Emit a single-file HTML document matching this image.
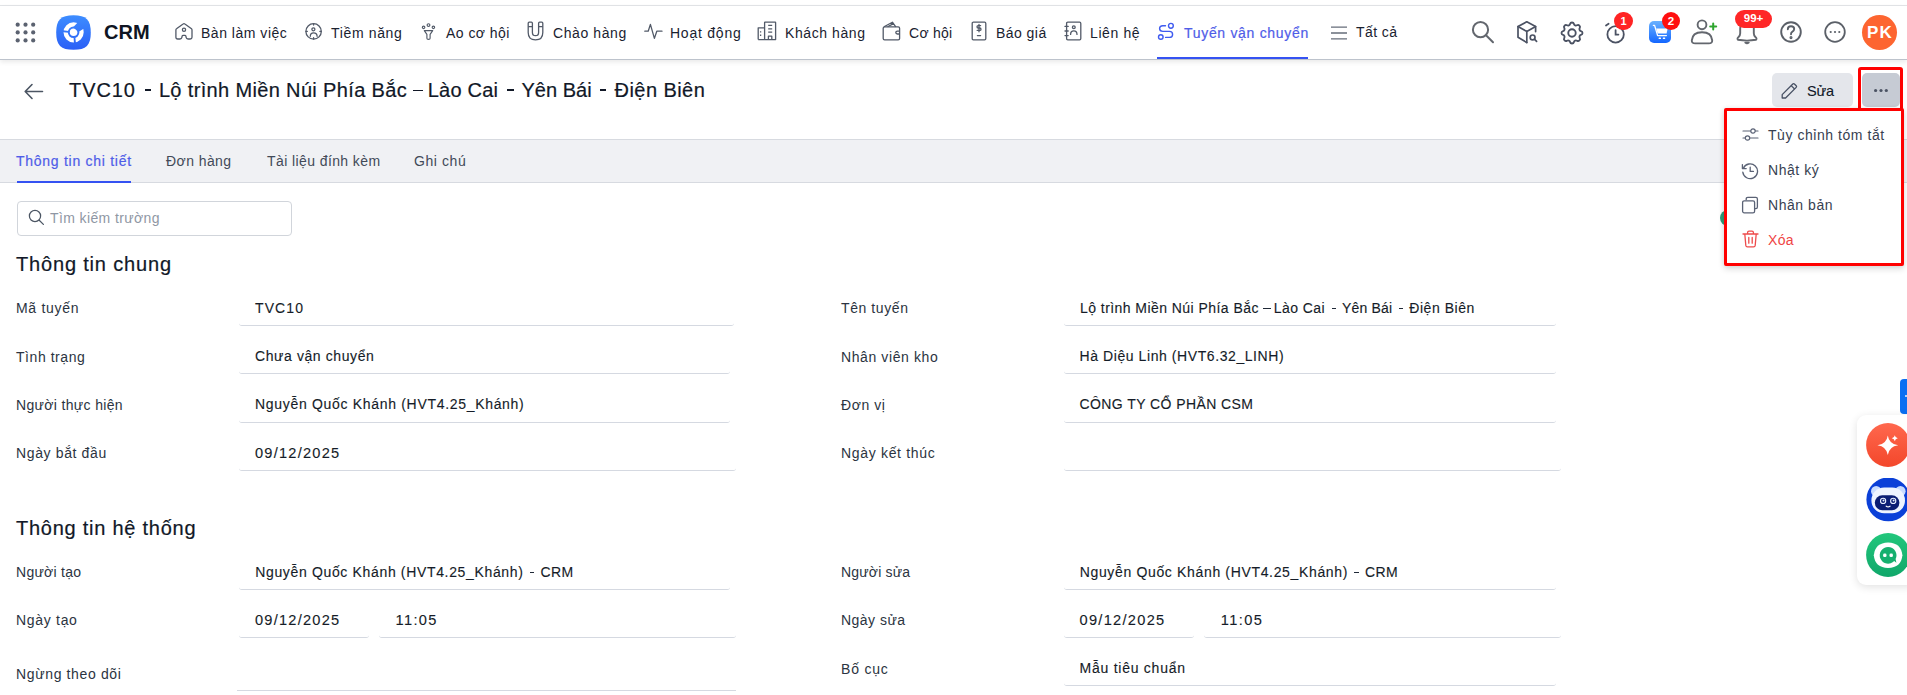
<!DOCTYPE html><html><head><meta charset="utf-8">
<style>
*{box-sizing:border-box;margin:0;padding:0}
html,body{width:1907px;height:695px;overflow:hidden;background:#fff}
body{position:relative;font-family:"Liberation Sans",sans-serif;color:#1f2937}
.a{position:absolute;white-space:nowrap}
.t14{font-size:14px;line-height:20px;letter-spacing:0.35px}
.topline{position:absolute;left:0;top:5px;width:1907px;height:1px;background:#e3e5e8}
.hdr{position:absolute;left:0;top:6px;width:1907px;height:54px;background:#fff;border-bottom:1px solid #bdc3cc;box-shadow:0 2px 5px rgba(0,0,0,0.09)}
.nav{color:#1a2230}
.ico{position:absolute}
.ico svg{display:block}
.lbl{color:#2b3441}
.val{color:#1f2937}
.ul{border-bottom:1px solid #d5d9e1;border-radius:0 0 3px 3px}
.sec{font-size:20px;line-height:24px;color:#111827}
.med{-webkit-text-stroke:0.2px currentColor}
.val.med{-webkit-text-stroke:0.12px currentColor}
.val{color:#151c28}
</style></head>
<body>
<div class="topline"></div>
<div class="hdr"></div>

<!-- header content -->
<div id="header">
  <!-- grid dots -->
  <svg class="a" style="left:14px;top:21px" width="24" height="24" viewBox="0 0 24 24" fill="#5b6270">
    <circle cx="3.7" cy="3.7" r="2.1"></circle><circle cx="11.5" cy="3.7" r="2.1"></circle><circle cx="19.2" cy="3.7" r="2.1"></circle>
    <circle cx="3.7" cy="11.4" r="2.1"></circle><circle cx="11.5" cy="11.4" r="2.1"></circle><circle cx="19.2" cy="11.4" r="2.1"></circle>
    <circle cx="3.7" cy="19.4" r="2.1"></circle><circle cx="11.5" cy="19.4" r="2.1"></circle><circle cx="19.2" cy="19.4" r="2.1"></circle>
  </svg>
  <!-- logo -->
  <svg class="a" style="left:56px;top:15px" width="35" height="35" viewBox="0 0 35 35">
    <defs><linearGradient id="lg" x1="0" y1="0" x2="0" y2="1"><stop offset="0" stop-color="#3d8dff"></stop><stop offset="1" stop-color="#2b5ff6"></stop></linearGradient>
    <mask id="lm" maskUnits="userSpaceOnUse" x="0" y="0" width="35" height="35">
      <rect x="0" y="0" width="35" height="35" fill="#000"></rect>
      <circle cx="17.6" cy="17.3" r="3.75" fill="#fff"></circle>
      <circle cx="17.6" cy="17.3" r="7.95" fill="none" stroke="#fff" stroke-width="4.3"></circle>
      <g fill="#000">
        <path d="M12.6 16.0L5.0 14.9L4.8 16.9L12.6 17.7Z"></path>
        <path d="M17.6 22.4L18.0 29.0L20.0 28.8L19.3 22.2Z"></path>
        <path d="M17.2 12.2L22.6 6.4L29.2 12.8L22.4 17.0Z"></path>
      </g>
    </mask></defs>
    <path d="M17.5 0.2C30.2 0.2 34.8 4.8 34.8 17.5S30.2 34.8 17.5 34.8 0.2 30.2 0.2 17.5 4.8 0.2 17.5 0.2Z" fill="url(#lg)"></path>
    <rect x="0" y="0" width="35" height="35" fill="#fff" mask="url(#lm)"></rect>
  </svg>
  <div class="a" style="left:104px;top:20px;font-size:20px;line-height:24px;font-weight:700;color:#0f1523;letter-spacing:0px">CRM</div>
</div>


<!-- nav icons -->
<svg class="a" style="left:174px;top:21px" width="20" height="20" viewBox="0 0 20 20" fill="none" stroke="#525a68" stroke-width="1.3" stroke-linejoin="round">
  <path d="M1.9 8.9Q1.9 8.2 2.5 7.8L9.1 2.9Q10 2.2 10.9 2.9L17.5 7.8Q18 8.2 18 8.9V16.2Q18 18 16.2 18H14Q12.4 18 12.1 16.4L11.9 15.2Q11.7 14.3 10.8 14.3H9.2Q8.3 14.3 8.1 15.2L7.9 16.4Q7.6 18 6 18H3.7Q1.9 18 1.9 16.2Z"></path>
  <circle cx="10" cy="8.7" r="1.6"></circle>
</svg>
<div class="a t14 nav" style="left: 201px; top: 23px; letter-spacing: 0.515px;">Bàn làm việc</div>

<svg class="a" style="left:304px;top:22px" width="19" height="19" viewBox="0 0 19 19" fill="none" stroke="#525a68" stroke-width="1.3" stroke-linecap="round">
  <circle cx="9.6" cy="9.4" r="7.7"></circle>
  <circle cx="9.4" cy="7.3" r="1.5"></circle>
  <path d="M6.3 14.3Q6.3 10.8 9.6 10.8Q13 10.8 13.1 14.3"></path>
  <path d="M9.6 1.8V3.1M9.6 17V15.7M2 9.4H3.3M17.2 9.4H15.9"></path>
</svg>
<div class="a t14 nav" style="left: 331px; top: 23px; letter-spacing: 0.649px;">Tiềm năng</div>

<svg class="a" style="left:421px;top:21px" width="15" height="20" viewBox="0 0 15 20" fill="none" stroke="#525a68" stroke-width="1.15" stroke-linejoin="round">
  <circle cx="2.6" cy="6.3" r="1.25"></circle><circle cx="7.5" cy="4.1" r="1.4"></circle><circle cx="12.4" cy="6.3" r="1.25"></circle>
  <path d="M3.3 9.6H11.7L9.1 13.4V17.2Q9.1 18.3 7.5 18.3Q5.9 18.3 5.9 17.2V13.4Z"></path>
</svg>
<div class="a t14 nav" style="left: 446px; top: 23px; letter-spacing: 0.455px;">Ao cơ hội</div>

<svg class="a" style="left:527px;top:21px" width="17" height="20" viewBox="0 0 17 20" fill="none" stroke="#525a68" stroke-width="1.3" stroke-linejoin="round">
  <path d="M1.2 2.2Q1.2 1.2 2.2 1.2H4.4Q5.4 1.2 5.4 2.2V11.4Q5.4 14.6 8.5 14.6Q11.6 14.6 11.6 11.4V2.2Q11.6 1.2 12.6 1.2H14.8Q15.8 1.2 15.8 2.2V11.4Q15.8 18.8 8.5 18.8Q1.2 18.8 1.2 11.4Z"></path>
  <path d="M1.2 5.6H5.4M11.6 5.6H15.8"></path>
</svg>
<div class="a t14 nav" style="left: 553px; top: 23px; letter-spacing: 0.588px;">Chào hàng</div>

<svg class="a" style="left:644px;top:23px" width="19" height="17" viewBox="0 0 19 17" fill="none" stroke="#525a68" stroke-width="1.3" stroke-linecap="round" stroke-linejoin="round">
  <path d="M0.8 8.2H4.2L6.4 1.4L10.4 15.4L12.8 8.2H18"></path>
</svg>
<div class="a t14 nav" style="left: 670px; top: 23px; letter-spacing: 0.764px;">Hoạt động</div>

<svg class="a" style="left:757px;top:21px" width="20" height="20" viewBox="0 0 20 20" fill="none" stroke="#525a68" stroke-width="1.3" stroke-linejoin="round">
  <path d="M1.2 18.6V6.8H7.6M7.6 18.6V1.6Q7.6 1.2 8 1.2H18.2Q18.6 1.2 18.6 1.6V18.6H1.2"></path>
  <path d="M11.2 4.4H15.2M11.2 7.8H15.2M11.2 11.2H15.2M3.6 10.2V11.6M3.6 13.6V15M11.4 18.6V15.2H14.8V18.6"></path>
</svg>
<div class="a t14 nav" style="left: 785px; top: 23px; letter-spacing: 0.587px;">Khách hàng</div>

<svg class="a" style="left:882px;top:21px" width="19" height="20" viewBox="0 0 19 20" fill="none" stroke="#525a68" stroke-width="1.3" stroke-linejoin="round">
  <path d="M1.2 7.2Q1.2 5.8 2.6 5.8H16.2Q17.6 5.8 17.6 7.2V17.4Q17.6 18.8 16.2 18.8H2.6Q1.2 18.8 1.2 17.4Z"></path>
  <path d="M2 5.8L10.4 1.2L13.8 5.8M5.6 5.8L11.6 2.6"></path>
  <path d="M17.6 10.2H15.4Q13.8 10.2 13.8 11.6Q13.8 13 15.4 13H17.6"></path>
</svg>
<div class="a t14 nav" style="left: 909px; top: 23px; letter-spacing: 0.269px;">Cơ hội</div>

<svg class="a" style="left:971px;top:21px" width="16" height="20" viewBox="0 0 16 20" fill="none" stroke="#525a68" stroke-width="1.3" stroke-linejoin="round" stroke-linecap="round">
  <path d="M1.2 2.4Q1.2 1.2 2.4 1.2H13.6Q14.8 1.2 14.8 2.4V17.6Q14.8 18.8 13.6 18.8H2.4Q1.2 18.8 1.2 17.6Z"></path>
  <path d="M9.6 4.6H7.2Q6 4.6 6 5.8Q6 7 7.2 7H8.8Q10 7 10 8.2Q10 9.4 8.8 9.4H6.2M8 3.4V10.8M6.4 14.6H9.6"></path>
</svg>
<div class="a t14 nav" style="left: 996px; top: 23px; letter-spacing: 0.456px;">Báo giá</div>

<svg class="a" style="left:1064px;top:21px" width="18" height="20" viewBox="0 0 18 20" fill="none" stroke="#525a68" stroke-width="1.3" stroke-linejoin="round" stroke-linecap="round">
  <path d="M2.6 2.4Q2.6 1.2 3.8 1.2H15.6Q16.8 1.2 16.8 2.4V17.6Q16.8 18.8 15.6 18.8H3.8Q2.6 18.8 2.6 17.6Z"></path>
  <path d="M1 5.4H4.2M1 10H4.2M1 14.6H4.2"></path>
  <circle cx="9.8" cy="6.2" r="1.4"></circle>
  <path d="M6.6 13.4Q6.6 9.8 9.8 9.8Q13 9.8 13 13.4"></path>
</svg>
<div class="a t14 nav" style="left: 1090px; top: 23px; letter-spacing: 0.614px;">Liên hệ</div>

<svg class="a" style="left:1157px;top:22px" width="19" height="19" viewBox="0 0 19 19" fill="none" stroke="#3f5bf0" stroke-width="1.4" stroke-linecap="round">
  <circle cx="3.8" cy="15" r="2.3"></circle><circle cx="13.9" cy="3.8" r="2.4"></circle>
  <path d="M8.5 3.8H5.8Q2.6 3.8 2.6 6.6Q2.6 9.4 5.8 9.4H12.4Q15.6 9.4 15.6 12.4Q15.6 15.4 12.4 15.4H8.6"></path>
</svg>
<div class="a t14 med" style="left: 1184px; top: 23px; color: rgb(79, 93, 232); letter-spacing: 0.689px;">Tuyến vận chuyển</div>
<div class="a" style="left:1157px;top:57px;width:151px;height:2px;background:#3552f2"></div>

<svg class="a" style="left:1330px;top:26px" width="18" height="14" viewBox="0 0 18 14" fill="none" stroke="#666d7a" stroke-width="1.3">
  <path d="M1 1.2H17M1 7H17M1 12.8H17"></path>
</svg>
<div class="a t14 nav" style="left: 1356px; top: 22px; letter-spacing: 0.403px;">Tất cả</div>


<!-- right icons -->
<svg class="a" style="left:1470px;top:20px" width="26" height="25" viewBox="0 0 26 25" fill="none" stroke="#63676e" stroke-width="2" stroke-linecap="round">
  <circle cx="10.5" cy="9.7" r="7.6"></circle><path d="M16 15.2L23 22.2"></path>
</svg>
<svg class="a" style="left:1516px;top:20px" width="25" height="25" viewBox="0 0 25 25" fill="none" stroke="#4b5263" stroke-width="1.7" stroke-linejoin="round" stroke-linecap="round">
  <path d="M19.6 11.6V6.6L10.8 1.8L2 6.6V17.2L10.8 22.6"></path>
  <path d="M2 6.6L10.8 11.4L19.6 6.6M10.8 11.4V22.4"></path>
  <circle cx="16.6" cy="17.4" r="2.4"></circle><path d="M18.4 19.2L20.6 21.4"></path>
</svg>
<svg class="a" style="left:1557.5px;top:18.5px" width="28" height="28" viewBox="0 0 24 24" fill="none" stroke="#4b5263" stroke-width="1.6" stroke-linejoin="round" stroke-linecap="round">
  <path d="M10.325 4.317c.426 -1.756 2.924 -1.756 3.35 0a1.724 1.724 0 0 0 2.573 1.066c1.543 -.94 3.31 .826 2.37 2.37a1.724 1.724 0 0 0 1.065 2.572c1.756 .426 1.756 2.924 0 3.35a1.724 1.724 0 0 0 -1.066 2.573c.94 1.543 -.826 3.31 -2.37 2.370a1.724 1.724 0 0 0 -2.572 1.065c-.426 1.756 -2.924 1.756 -3.35 0a1.724 1.724 0 0 0 -2.573 -1.066c-1.543 .94 -3.31 -.826 -2.37 -2.37a1.724 1.724 0 0 0 -1.065 -2.572c-1.756 -.426 -1.756 -2.924 0 -3.35a1.724 1.724 0 0 0 1.066 -2.573c-.94 -1.543 .826 -3.31 2.37 -2.37c1 .608 2.296 .07 2.572 -1.065z"></path>
  <circle cx="12" cy="12" r="3.2"></circle>
</svg>
<svg class="a" style="left:1603px;top:20px" width="24" height="25" viewBox="0 0 24 25" fill="none" stroke="#4b5263" stroke-width="1.8" stroke-linecap="round">
  <circle cx="12.6" cy="14.4" r="8.2"></circle><path d="M12.6 10.2V14.6H15.4M3 5.6L5.6 3.8"></path>
</svg>
<div class="a" style="left:1614px;top:12px;width:19px;height:18px;border-radius:9px;background:#ff2424;color:#fff;font-size:11px;font-weight:700;line-height:18px;text-align:center">1</div>

<svg class="a" style="left:1649px;top:21px" width="22" height="22" viewBox="0 0 22 22">
  <defs><linearGradient id="cg" x1="0" y1="0" x2="0" y2="1"><stop offset="0" stop-color="#6ab2ff"></stop><stop offset="1" stop-color="#1366ff"></stop></linearGradient></defs>
  <rect x="0" y="0" width="22" height="22" rx="5" fill="url(#cg)"></rect>
  <g fill="none" stroke="#fff" stroke-width="1.3" stroke-linecap="round" stroke-linejoin="round">
    <path d="M4.4 4.4H5.6L8.6 14.6H17.4"></path>
  </g>
  <path d="M7.2 7.4H18.6L17.6 12.6H8.6Z" fill="#fff"></path>
  <g fill="#fff"><rect x="9.6" y="16.4" width="2.4" height="1.6" rx="0.6"></rect><rect x="13.8" y="16.4" width="2.4" height="1.6" rx="0.6"></rect></g>
</svg>
<div class="a" style="left:1662px;top:12px;width:18px;height:18px;border-radius:9px;background:#ff0f0f;color:#fff;font-size:11.5px;font-weight:700;line-height:18px;text-align:center">2</div>

<svg class="a" style="left:1690px;top:19px" width="28" height="26" viewBox="0 0 28 26" fill="none" stroke="#63676e" stroke-width="1.9" stroke-linecap="round">
  <circle cx="12" cy="5.8" r="4.4"></circle>
  <path d="M5.2 24.4Q1.6 24.4 1.8 21.4Q2.4 13.2 12 13.2Q21.6 13.2 22.2 21.4Q22.4 24.4 18.8 24.4Z"></path>
  <path d="M23.2 4.6V10.6M20.2 7.6H26.2" stroke="#2ea52e" stroke-width="2"></path>
</svg>

<svg class="a" style="left:1735px;top:18px" width="24" height="27" viewBox="0 0 24 27" fill="none" stroke="#63676e" stroke-width="1.9" stroke-linecap="round" stroke-linejoin="round">
  <path d="M5.2 10Q5.2 3 12 3Q18.8 3 18.8 10V15.2Q18.8 17.6 20.6 19.2Q22.2 20.8 21 21.8Q12 23.4 3 21.8Q1.8 20.8 3.4 19.2Q5.2 17.6 5.2 15.2Z"></path>
  <path d="M10.3 24.6Q12 26 13.7 24.6Z" fill="#63676e"></path>
</svg>
<div class="a" style="left:1735px;top:10px;width:37px;height:18px;border-radius:9px;background:#ff2727;color:#fff;font-size:11.5px;font-weight:700;line-height:17px;text-align:center">99+</div>

<svg class="a" style="left:1779px;top:20px" width="24" height="24" viewBox="0 0 24 24" fill="none" stroke="#5b6068" stroke-width="1.9" stroke-linecap="round">
  <circle cx="12" cy="12" r="9.8"></circle>
  <path d="M8.8 9.2Q8.8 6.2 12 6.2Q15.2 6.2 15.2 9Q15.2 10.8 13.2 11.8Q12 12.4 12 14.2"></path>
  <circle cx="12" cy="17.6" r="0.6" fill="#5b6068"></circle>
</svg>
<svg class="a" style="left:1823px;top:20px" width="24" height="24" viewBox="0 0 24 24" fill="none" stroke="#5b6068" stroke-width="1.8">
  <circle cx="12" cy="12" r="9.8"></circle>
  <g fill="#5b6068" stroke="none"><circle cx="7.7" cy="12" r="1.1"></circle><circle cx="12" cy="12" r="1.1"></circle><circle cx="16.3" cy="12" r="1.1"></circle></g>
</svg>
<div class="a" style="left:1862px;top:15px;width:35px;height:35px;border-radius:50%;background:#fd6530;color:#fff;font-size:17px;font-weight:700;line-height:36px;text-align:center;letter-spacing:1.2px;text-indent:1.2px">PK</div>


<!-- title row -->
<svg class="a" style="left:24px;top:83px" width="20" height="17" viewBox="0 0 20 17" fill="none" stroke="#4b5563" stroke-width="1.6" stroke-linecap="round" stroke-linejoin="round">
  <path d="M18.5 8.5H1.5M8 1.5L1.2 8.5L8 15.5"></path>
</svg>
<div class="a med" style="left: 69.1px; top: 78px; font-size: 20px; line-height: 24px; color: rgb(17, 24, 39); letter-spacing: 0.888px;">TVC10</div>
<div class="a med" style="left: 158.9px; top: 78px; font-size: 20px; line-height: 24px; color: rgb(17, 24, 39); letter-spacing: 0.351px;">Lộ trình Miền Núi Phía Bắc</div>
<div class="a med" style="left: 427.7px; top: 78px; font-size: 20px; line-height: 24px; color: rgb(17, 24, 39); letter-spacing: 0.227px;">Lào Cai</div>
<div class="a med" style="left: 521.5px; top: 78px; font-size: 20px; line-height: 24px; color: rgb(17, 24, 39); letter-spacing: 0.006px;">Yên Bái</div>
<div class="a med" style="left: 614.6px; top: 78px; font-size: 20px; line-height: 24px; color: rgb(17, 24, 39); letter-spacing: 0.435px;">Điện Biên</div>
<div class="a" style="left:144.7px;top:89.3px;width:6.300000000000011px;height:1.6px;background:#111827"></div>
<div class="a" style="left:507.3px;top:89.3px;width:6.300000000000011px;height:1.6px;background:#111827"></div>
<div class="a" style="left:600.2px;top:89.3px;width:6.2999999999999545px;height:1.6px;background:#111827"></div>
<div class="a" style="left:412.8px;top:89.5px;width:10px;height:1.3px;background:#111827"></div>


<!-- tabs -->
<div class="a" style="left:0;top:139px;width:1907px;height:44px;background:#f0f1f4;border-top:1px solid #d7dae0;border-bottom:1px solid #d7dae0"></div>
<div class="a" style="left:17px;top:181px;width:114px;height:2px;background:#3552f2"></div>
<div class="a t14 med" style="left: 16px; top: 151px; color: rgb(79, 93, 232); letter-spacing: 0.729px;">Thông tin chi tiết</div>
<div class="a t14" style="left: 166px; top: 151px; color: rgb(66, 74, 88); letter-spacing: 0.428px;">Đơn hàng</div>
<div class="a t14" style="left: 267px; top: 151px; color: rgb(66, 74, 88); letter-spacing: 0.407px;">Tài liệu đính kèm</div>
<div class="a t14" style="left: 414px; top: 151px; color: rgb(66, 74, 88); letter-spacing: 0.578px;">Ghi chú</div>

<!-- search -->
<div class="a" style="left:17px;top:201px;width:275px;height:35px;border:1px solid #d1d5db;border-radius:4px"></div>
<svg class="a" style="left:28px;top:209px" width="17" height="17" viewBox="0 0 17 17" fill="none" stroke="#4b5563" stroke-width="1.25" stroke-linecap="round"><circle cx="7" cy="7" r="5.6"></circle><path d="M11.2 11.2L15.4 15.4"></path></svg>
<div class="a t14" style="left: 50px; top: 208px; color: rgb(143, 151, 164); letter-spacing: 0.385px;">Tìm kiếm trường</div>

<!--FORM-->
<div class="a sec med" style="left: 16px; top: 252.2px; letter-spacing: 0.826px;">Thông tin chung</div>
<div class="a t14 lbl" style="left: 16px; top: 297.9px; letter-spacing: 0.704px;">Mã tuyến</div>
<div class="a t14 val med" style="left: 255px; top: 297.6px; letter-spacing: 1.11px;">TVC10</div>
<div class="a ul" style="left:238.5px;top:317px;width:495.5px;height:9px"></div>
<div class="a t14 lbl" style="left: 841px; top: 297.9px; letter-spacing: 0.582px;">Tên tuyến</div>
<div class="a t14 val med" style="left: 1080px; top: 297.6px; letter-spacing: 0.444px;">Lộ trình Miền Núi Phía Bắc</div>
<div class="a t14 val med" style="left: 1273.8px; top: 297.6px; letter-spacing: 0.409px;">Lào Cai</div>
<div class="a t14 val med" style="left: 1342.1px; top: 297.6px; letter-spacing: 0.162px;">Yên Bái</div>
<div class="a t14 val med" style="left: 1409.3px; top: 297.6px; letter-spacing: 0.54px;">Điện Biên</div>
<div class="a" style="left:1263.4px;top:308.2px;width:7.5px;height:1.3px;background:#1f2937"></div>
<div class="a" style="left:1331.7px;top:308.2px;width:3.9px;height:1.3px;background:#1f2937"></div>
<div class="a" style="left:1399.3px;top:308.2px;width:3.9px;height:1.3px;background:#1f2937"></div>
<div class="a ul" style="left:1063.5px;top:317px;width:492.0px;height:9px"></div>
<div class="a t14 lbl" style="left: 16px; top: 346.9px; letter-spacing: 0.555px;">Tình trạng</div>
<div class="a t14 val med" style="left: 255px; top: 345.9px; letter-spacing: 0.59px;">Chưa vận chuyển</div>
<div class="a ul" style="left:238.5px;top:365px;width:491.5px;height:9px"></div>
<div class="a t14 lbl" style="left: 841px; top: 346.9px; letter-spacing: 0.6px;">Nhân viên kho</div>
<div class="a t14 val med" style="left: 1079.5px; top: 345.9px; letter-spacing: 0.578px;">Hà Diệu Linh (HVT6.32_LINH)</div>
<div class="a ul" style="left:1063.5px;top:365px;width:492.0px;height:9px"></div>
<div class="a t14 lbl" style="left: 16px; top: 394.9px; letter-spacing: 0.34px;">Người thực hiện</div>
<div class="a t14 val med" style="left: 255px; top: 393.9px; letter-spacing: 0.688px;">Nguyễn Quốc Khánh (HVT4.25_Khánh)</div>
<div class="a ul" style="left:238.5px;top:414px;width:491.5px;height:9px"></div>
<div class="a t14 lbl" style="left: 841px; top: 394.9px; letter-spacing: 0.548px;">Đơn vị</div>
<div class="a t14 val med" style="left: 1079.5px; top: 393.9px; letter-spacing: 0.42px;">CÔNG TY CỔ PHẦN CSM</div>
<div class="a ul" style="left:1063.5px;top:414px;width:492.0px;height:9px"></div>
<div class="a t14 lbl" style="left: 16px; top: 443.1px; letter-spacing: 0.629px;">Ngày bắt đầu</div>
<div class="a t14 val med" style="left: 255px; top: 442.5px; font-size: 14.6px; letter-spacing: 1.236px;">09/12/2025</div>
<div class="a ul" style="left:238.5px;top:462px;width:497.5px;height:9px"></div>
<div class="a t14 lbl" style="left: 841px; top: 443.1px; letter-spacing: 0.676px;">Ngày kết thúc</div>
<div class="a ul" style="left:1063.5px;top:462px;width:497.5px;height:9px"></div>
<div class="a sec med" style="left: 16px; top: 515.9px; letter-spacing: 0.753px;">Thông tin hệ thống</div>
<div class="a t14 lbl" style="left: 16px; top: 562px; letter-spacing: 0.275px;">Người tạo</div>
<div class="a t14 val med" style="left: 255.2px; top: 561.8px; letter-spacing: 0.656px;">Nguyễn Quốc Khánh (HVT4.25_Khánh)</div>
<div class="a" style="left:529.6px;top:571.6px;width:4.8px;height:1.3px;background:#1f2937"></div>
<div class="a t14 val med" style="left: 540.5px; top: 561.8px; letter-spacing: 0.365px;">CRM</div>
<div class="a ul" style="left:238.5px;top:581px;width:491.5px;height:9px"></div>
<div class="a t14 lbl" style="left: 16px; top: 610px; letter-spacing: 0.696px;">Ngày tạo</div>
<div class="a t14 val med" style="left: 255px; top: 609.9px; font-size: 14.6px; letter-spacing: 1.236px;">09/12/2025</div>
<div class="a t14 val med" style="left: 395.5px; top: 609.9px; font-size: 14.6px; letter-spacing: 1.383px;">11:05</div>
<div class="a ul" style="left:238.5px;top:629px;width:130.5px;height:9px"></div>
<div class="a ul" style="left:378.5px;top:629px;width:357.5px;height:9px"></div>
<div class="a t14 lbl" style="left: 16px; top: 663.8px; letter-spacing: 0.643px;">Ngừng theo dõi</div>
<div class="a" style="left:237px;top:690px;width:499px;height:1px;background:#d5d9e1"></div>
<div class="a t14 lbl" style="left: 841px; top: 562px; letter-spacing: 0.176px;">Người sửa</div>
<div class="a t14 val med" style="left: 1079.7px; top: 561.8px; letter-spacing: 0.656px;">Nguyễn Quốc Khánh (HVT4.25_Khánh)</div>
<div class="a" style="left:1354.1px;top:571.6px;width:4.8px;height:1.3px;background:#1f2937"></div>
<div class="a t14 val med" style="left: 1365px; top: 561.8px; letter-spacing: 0.365px;">CRM</div>
<div class="a ul" style="left:1063.5px;top:581px;width:492.0px;height:9px"></div>
<div class="a t14 lbl" style="left: 841px; top: 610px; letter-spacing: 0.469px;">Ngày sửa</div>
<div class="a t14 val med" style="left: 1079.5px; top: 609.9px; font-size: 14.6px; letter-spacing: 1.291px;">09/12/2025</div>
<div class="a t14 val med" style="left: 1220.8px; top: 609.9px; font-size: 14.6px; letter-spacing: 1.383px;">11:05</div>
<div class="a ul" style="left:1063.5px;top:629px;width:130.5px;height:9px"></div>
<div class="a ul" style="left:1203.5px;top:629px;width:357.5px;height:9px"></div>
<div class="a t14 lbl" style="left: 841px; top: 658.9px; letter-spacing: 0.802px;">Bố cục</div>
<div class="a t14 val med" style="left: 1079.5px; top: 658.4px; letter-spacing: 0.753px;">Mẫu tiêu chuẩn</div>
<div class="a ul" style="left:1063.5px;top:677px;width:492.0px;height:9px"></div>
<!--/FORM-->
<!-- Sửa button -->
<div class="a" style="left:1772px;top:73px;width:81px;height:34px;border-radius:5px;background:#e4e6eb"></div>
<svg class="a" style="left:1781px;top:82px" width="18" height="17" viewBox="0 0 18 17" fill="none" stroke="#475063" stroke-width="1.3" stroke-linejoin="round">
  <path d="M1.2 12.6L11.8 2Q12.6 1.2 13.4 2L15.2 3.8Q16 4.6 15.2 5.4L4.6 16H1.2Z"></path><path d="M10.2 3.6L13.6 7"></path>
</svg>
<div class="a t14" style="left: 1807px; top: 81px; color: rgb(17, 24, 39); font-size: 14.5px; -webkit-text-stroke: 0.1px currentcolor; letter-spacing: -0.147px;">Sửa</div>

<!-- more button -->
<div class="a" style="left:1862px;top:73px;width:38px;height:34px;border-radius:5px;background:#c6cbd4"></div>
<svg class="a" style="left:1873px;top:88px" width="16" height="5" viewBox="0 0 16 5" fill="#4b5363"><circle cx="2.6" cy="2.5" r="1.6"></circle><circle cx="8" cy="2.5" r="1.6"></circle><circle cx="13.3" cy="2.5" r="1.6"></circle></svg>
<div class="a" style="left:1858px;top:67px;width:45px;height:44px;border:3px solid #ff0000;border-radius:3px"></div>

<!-- green dot behind dropdown -->
<div class="a" style="left:1720px;top:210px;width:16px;height:16px;border-radius:50%;background:#2e9e78"></div>

<!-- dropdown -->
<div class="a" style="left:1724px;top:108px;width:180px;height:158px;background:#fff;border:3px solid #ff0000;border-radius:2px;box-shadow:0 3px 6px rgba(0,0,0,0.14),-1px 0 5px rgba(0,0,0,0.06)"></div>
<svg class="a" style="left:1742px;top:127px" width="17" height="15" viewBox="0 0 17 15" fill="none" stroke="#5a6275" stroke-width="1.2" stroke-linecap="round">
  <path d="M1 4H16M1 11H16"></path><circle cx="11" cy="4" r="2.2" fill="#fff"></circle><circle cx="5.5" cy="11" r="2.2" fill="#fff"></circle>
</svg>
<div class="a t14" style="left: 1768px; top: 125px; color: rgb(55, 65, 81); letter-spacing: 0.546px;">Tùy chỉnh tóm tắt</div>
<svg class="a" style="left:1741px;top:162px" width="18" height="18" viewBox="0 0 18 18" fill="none" stroke="#5a6275" stroke-width="1.3" stroke-linecap="round" stroke-linejoin="round">
  <path d="M2.4 6.2A7.4 7.4 0 1 1 1.8 10.2"></path><path d="M1.4 2.6V6.6H5.2"></path><path d="M9.2 5.2V9.4H12.4"></path>
</svg>
<div class="a t14" style="left: 1768px; top: 160px; color: rgb(55, 65, 81); letter-spacing: 0.559px;">Nhật ký</div>
<svg class="a" style="left:1741px;top:196px" width="18" height="18" viewBox="0 0 18 18" fill="none" stroke="#5a6275" stroke-width="1.3" stroke-linejoin="round">
  <path d="M5.2 4.2V3Q5.2 1.4 6.8 1.4H14.8Q16.4 1.4 16.4 3V11Q16.4 12.6 14.8 12.6H13.6"></path>
  <rect x="1.6" y="4.8" width="12" height="12" rx="1.6"></rect>
</svg>
<div class="a t14" style="left: 1768px; top: 195px; color: rgb(55, 65, 81); letter-spacing: 0.543px;">Nhân bản</div>
<svg class="a" style="left:1742px;top:230px" width="17" height="18" viewBox="0 0 17 18" fill="none" stroke="#ee4b4b" stroke-width="1.3" stroke-linecap="round" stroke-linejoin="round">
  <path d="M1 4H16M5.6 4V2.6Q5.6 1.2 7 1.2H10Q11.4 1.2 11.4 2.6V4M2.8 4L3.8 15.4Q4 16.8 5.4 16.8H11.6Q13 16.8 13.2 15.4L14.2 4M6.8 7.4V13.2M10.2 7.4V13.2"></path>
</svg>
<div class="a t14" style="left: 1768px; top: 230px; color: rgb(239, 68, 68); letter-spacing: 0.349px;">Xóa</div>

<!-- right blue tab -->
<div class="a" style="left:1900px;top:379px;width:10px;height:35px;border-radius:4px 0 0 4px;background:#0b6ff2"></div>
<div class="a" style="left:1905px;top:395px;width:2px;height:2px;background:#b5d3fa"></div>

<!-- widget panel -->
<div class="a" style="left:1857px;top:415px;width:60px;height:170px;border-radius:9px;background:#fff;box-shadow:0 2px 9px rgba(0,0,0,0.12)"></div>
<svg class="a" style="left:1866px;top:422.5px" width="44" height="44" viewBox="0 0 44 44">
  <defs><linearGradient id="og" x1="0" y1="0" x2="0" y2="1"><stop offset="0" stop-color="#ff684e"></stop><stop offset="1" stop-color="#f3472b"></stop></linearGradient></defs>
  <circle cx="22" cy="22" r="21.9" fill="url(#og)"></circle>
  <path d="M21.8 12.4Q23 21 32.2 22.3Q23 23.6 21.8 32.1Q20.6 23.6 11.4 22.3Q20.6 21 21.8 12.4Z" fill="#fff"></path>
  <path d="M28.8 12.2Q29.2 14.8 31.8 15.2Q29.2 15.6 28.8 18.2Q28.4 15.6 25.8 15.2Q28.4 14.8 28.8 12.2Z" fill="#fff"></path>
</svg>
<svg class="a" style="left:1866px;top:478px" width="44" height="44" viewBox="0 0 44 44">
  <circle cx="22.3" cy="21.4" r="21.9" fill="#0b40d8"></circle>
  <circle cx="10.2" cy="13.2" r="5.2" fill="#c9dcff"></circle><circle cx="34.4" cy="13.2" r="5.2" fill="#c9dcff"></circle>
  <rect x="5.4" y="9.6" width="33.6" height="25.6" rx="12.8" fill="#eef4ff"></rect>
  <rect x="8.8" y="17.2" width="24.6" height="15" rx="7.5" fill="#0a1d74"></rect>
  <circle cx="17.1" cy="22.9" r="2.6" fill="none" stroke="#e6eeff" stroke-width="1.1"></circle><circle cx="27.2" cy="22.9" r="2.6" fill="none" stroke="#e6eeff" stroke-width="1.1"></circle>
  <circle cx="17.5" cy="22.6" r="1" fill="#e6eeff"></circle><circle cx="27.6" cy="22.6" r="1" fill="#e6eeff"></circle>
  <path d="M20.2 28.2Q22.1 29.5 24 28.2" stroke="#fff" stroke-width="1.2" fill="none" stroke-linecap="round"></path>
</svg>
<svg class="a" style="left:1866px;top:533px" width="44" height="44" viewBox="0 0 44 44">
  <defs><linearGradient id="gg" x1="0" y1="0" x2="0" y2="1"><stop offset="0" stop-color="#22c77c"></stop><stop offset="1" stop-color="#10a76a"></stop></linearGradient></defs>
  <circle cx="22.1" cy="22" r="22" fill="url(#gg)"></circle>
  <path d="M7.8 22.3Q9 9.6 22.1 9.4Q35.2 9.6 36.4 22.3Q35.2 34.8 22.1 35Q9 34.8 7.8 22.3Z" fill="#fff"></path>
  <path d="M22.1 13.9A8.4 8.4 0 1 0 28.2 28.1L30.4 29.7L29.6 26.1A8.4 8.4 0 0 0 22.1 13.9Z" fill="#16b06f"></path>
  <rect x="17.1" y="20.6" width="3.4" height="3.4" rx="1.3" fill="#fff"></rect><rect x="23.5" y="20.6" width="3.4" height="3.4" rx="1.3" fill="#fff"></rect>
</svg>


</body></html>
